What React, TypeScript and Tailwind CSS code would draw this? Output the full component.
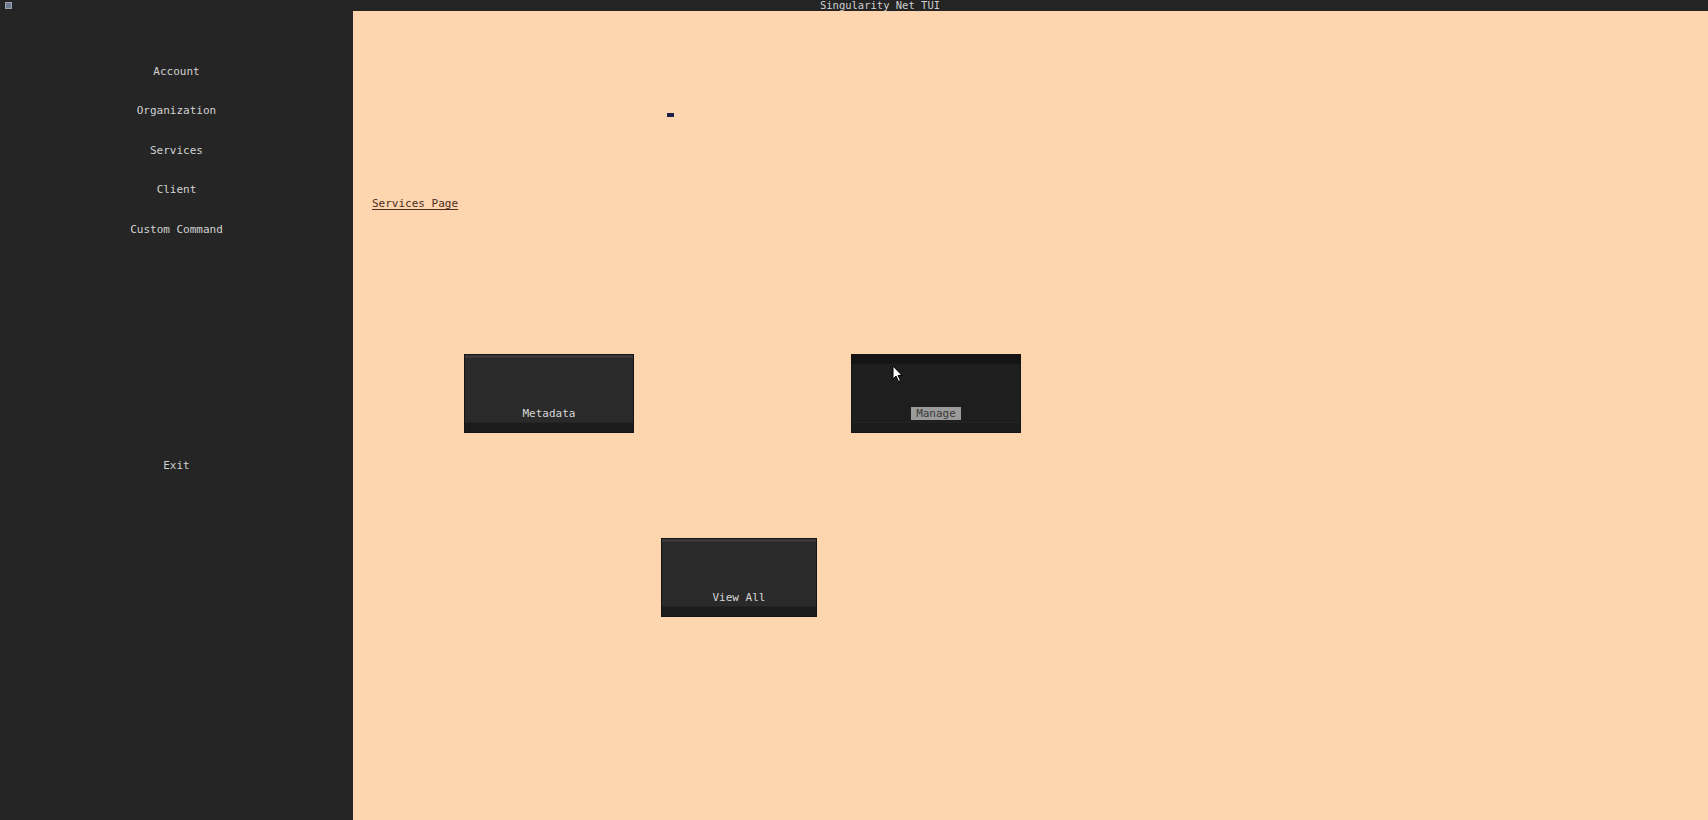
import React from 'react';

const MENU = ['Account', 'Organization', 'Services', 'Client', 'Custom Command'];

function Cursor() {
  return (
    <svg className="absolute left-[40px] top-[10px]" width="12" height="18" viewBox="0 0 12 18">
      <path d="M1 1 L1 14 L4 11 L6.5 16.5 L8.5 15.5 L6 10.5 L10 10.5 Z" fill="#ffffff" stroke="#000000" strokeWidth="1" strokeLinejoin="round" />
    </svg>
  );
}

function TuiButton({ label, width, focused }: { label: string; width: string; focused?: boolean }) {
  return (
    <div className={`relative ${width} h-[79px] border border-[#141414] flex flex-col`}>
      <div className={focused ? 'h-[9px] bg-[#151515]' : 'h-[3px] bg-[#383838]'}></div>
      <div className={`flex-1 flex items-end justify-center pb-[2px] ${focused ? 'bg-[#1f1e1f]' : 'bg-[#2a2a2a]'}`}>
        {focused ? (
          <span className="px-[5px] h-[13px] leading-[13px] bg-[#9b9b9b] text-[#3a3a3a]">{label}</span>
        ) : (
          <span className="h-[13px] leading-[13px] text-[#d6d6d6]">{label}</span>
        )}
      </div>
      <div className="h-[10px] bg-[#1b1b1b] border-t border-[#232323]"></div>
      {focused && <Cursor />}
    </div>
  );
}

export default function App() {
  return (
    <div
      className="w-[1708px] h-[820px] flex flex-col bg-[#252525] text-[11px] overflow-hidden"
      style={{ fontFamily: '"DejaVu Sans Mono", "Liberation Mono", monospace' }}
    >
      {/* Title bar */}
      <div className="relative z-10 h-[11px] bg-[#242424] flex items-start justify-center pl-[52px]">
        <div className="absolute left-[5px] top-[2px] w-[7px] h-[7px] bg-[#6d7a8f] border border-[#9aa3b5]"></div>
        <span className="text-[10.5px] leading-[10px] text-[#cfcfcf]">Singularity_Net_TUI</span>
      </div>

      <div className="flex-1 flex">
        {/* Sidebar */}
        <div className="w-[353px] flex flex-col pt-[41px] text-[#d2d2d2]">
          {MENU.map(item => (
            <div key={item} className="h-[39.5px] flex items-center justify-center">
              {item}
            </div>
          ))}
          <div className="h-[39.5px] mt-[197px] flex items-center justify-center">Exit</div>
        </div>

        {/* Main */}
        <div className="flex-1 bg-[#fdd5ae] flex flex-col">
          <div className="ml-[314px] mt-[102px] w-[7px] h-[4px] bg-[#1c2147]"></div>
          <div className="ml-[19px] mt-[80px] h-[14px] leading-[14px] text-[#4a2e22] underline underline-offset-2">
            Services Page
          </div>
          <div className="mt-[143px] pl-[111px] flex gap-[217px]">
            <TuiButton label="Metadata" width="w-[170px]" />
            <TuiButton label="Manage" width="w-[170px]" focused />
          </div>
          <div className="mt-[105px] ml-[308px]">
            <TuiButton label="View All" width="w-[156px]" />
          </div>
        </div>
      </div>
    </div>
  );
}
